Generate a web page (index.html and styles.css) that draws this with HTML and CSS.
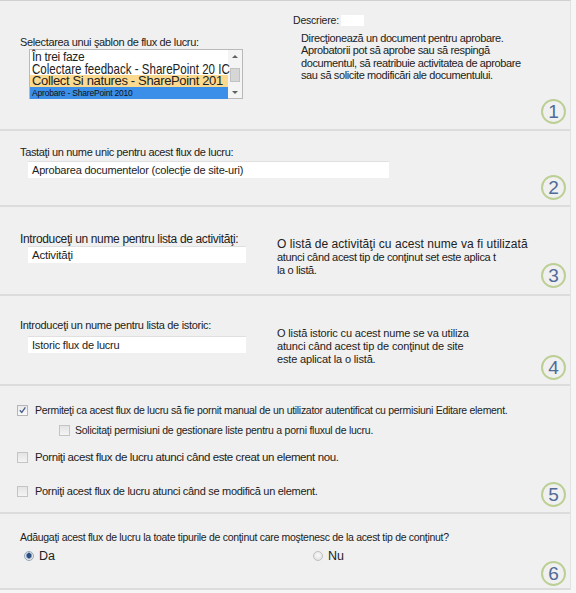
FILE: index.html
```html
<!DOCTYPE html>
<html lang="ro">
<head>
<meta charset="utf-8">
<title>Flux de lucru</title>
<link rel="stylesheet" href="styles.css">
</head>
<body>
<div class="page">
  <section class="sec sec1">
    <div class="col-left">
      <div class="label l1">Selectarea unui şablon de flux de lucru:</div>
      <div class="listbox">
        <div class="items">
          <div class="it it1">În trei faze</div>
          <div class="it it2"><span class="sq sq2">Colectare feedback - SharePoint 20 IC</span></div>
          <div class="it it3"><span class="sq sq3">Collect Si natures - SharePoint 201</span></div>
          <div class="it it4">Aprobare - SharePoint 2010</div>
        </div>
        <div class="scroll">
          <span class="arr up"></span>
          <span class="thumb"></span>
          <span class="arr down"></span>
        </div>
      </div>
    </div>
    <div class="col-right">
      <div class="desc-head">Descriere:<span class="blank"></span></div>
      <div class="desc">Direcţionează un document pentru aprobare.<br>Aprobatorii pot să aprobe sau să respingă<br>documentul, să reatribuie activitatea de aprobare<br>sau să solicite modificări ale documentului.</div>
    </div>
    <span class="num n1">1</span>
  </section>

  <section class="sec sec2">
    <div class="label l2">Tastaţi un nume unic pentru acest flux de lucru:</div>
    <div class="field f-wide">Aprobarea documentelor (colecţie de site-uri)</div>
    <span class="num n2">2</span>
  </section>

  <section class="sec sec3">
    <div class="col-left">
      <div class="label l3">Introduceţi un nume pentru lista de activităţi:</div>
      <div class="field f-mid">Activităţi</div>
    </div>
    <div class="col-note">
      <div class="note-big">O listă de activităţi cu acest nume va fi utilizată</div>
      <div class="note">atunci când acest tip de conţinut set este aplica t<br>la o listă.</div>
    </div>
    <span class="num n3">3</span>
  </section>

  <section class="sec sec4">
    <div class="col-left">
      <div class="label l4">Introduceţi un nume pentru lista de istoric:</div>
      <div class="field f-mid f-small">Istoric flux de lucru</div>
    </div>
    <div class="col-note">
      <div class="note note4">O listă istoric cu acest nume se va utiliza<br>atunci când acest tip de conţinut de site<br>este aplicat la o listă.</div>
    </div>
    <span class="num n4">4</span>
  </section>

  <section class="sec sec5">
    <div class="chk-row r1"><span class="cb checked"><svg viewBox="0 0 10 10" width="10" height="10"><path d="M2 5.2 L4.2 7.6 L8.2 2" fill="none" stroke="#4a5f8c" stroke-width="1.5"/></svg></span><span class="ct ct1">Permiteţi ca acest flux de lucru să fie pornit manual de un utilizator autentificat cu permisiuni Editare element.</span></div>
    <div class="chk-row r2"><span class="cb"></span><span class="ct ct2">Solicitaţi permisiuni de gestionare liste pentru a porni fluxul de lucru.</span></div>
    <div class="chk-row r3"><span class="cb"></span><span class="ct ct3">Porniţi acest flux de lucru atunci când este creat un element nou.</span></div>
    <div class="chk-row r4"><span class="cb"></span><span class="ct ct4">Porniţi acest flux de lucru atunci când se modifică un element.</span></div>
    <span class="num n5">5</span>
  </section>

  <section class="sec sec6">
    <div class="label l6">Adăugaţi acest flux de lucru la toate tipurile de conţinut care moştenesc de la acest tip de conţinut?</div>
    <div class="radios">
      <div class="radio-item ri-da"><span class="rb on"></span><span class="rt">Da</span></div>
      <div class="radio-item ri-nu"><span class="rb"></span><span class="rt">Nu</span></div>
    </div>
    <span class="num n6">6</span>
  </section>
</div>
</body>
</html>
```

FILE: styles.css
```css
* { box-sizing: border-box; }
html, body { margin: 0; padding: 0; }
body {
  background: #f6f6f6;
  font-family: "Liberation Sans", Arial, sans-serif;
  color: #222;
  width: 576px;
  height: 593px;
  overflow: hidden;
}
.page {
  width: 571px;
  background: #f0f0f0;
  border-top: 1px solid #d0d0d0;
  border-right: 1px solid #e2e2e2;
}
.sec {
  position: relative;
  border-bottom: 2px solid #dcdcdc;
  padding-left: 20px;
}
.sec1 { height: 130px; display: grid; grid-template-columns: 273px 1fr; }
.sec2 { height: 76px; padding-top: 15px; }
.sec3 { height: 89px; display: grid; grid-template-columns: 257px 1fr; padding-top: 26px; }
.sec4 { height: 90px; display: grid; grid-template-columns: 257px 1fr; padding-top: 23px; }
.sec5 { height: 128px; padding-top: 17px; padding-left: 17px; }
.sec6 { height: 76px; padding-top: 17px; }

.label { font-size: 11px; line-height: 13px; letter-spacing: -0.3px; white-space: nowrap; }
.l1 { margin-top: 35px; letter-spacing: -0.35px; }
.l2 { letter-spacing: -0.35px; }
.l3 { font-size: 12px; line-height: 13px; letter-spacing: -0.35px; }
.l4 { font-size: 11px; line-height: 13px; letter-spacing: -0.3px; }
.l6 { font-size: 10.5px; letter-spacing: -0.3px; }

/* listbox */
.listbox {
  margin-left: 9px;
  width: 214px;
  height: 50px;
  background: #fff;
  border: 1px solid #b9b9b9;
  display: flex;
  position: relative;
}
.items { flex: 1; min-width: 0; white-space: nowrap; padding-top: 1px; }
.it { padding-left: 2px; height: 12px; }
.it1 { font-size: 12px; line-height: 12px; letter-spacing: -0.3px; }
.it2 { font-size: 15px; line-height: 12px; position: relative; z-index: 2; }
.it3 { font-size: 13px; line-height: 12px; background: #fbd98f; }
.it4 { font-size: 8.5px; line-height: 12px; background: #3b8fe8; color: #111; letter-spacing: -0.2px; }
.sq { display: inline-block; transform-origin: 0 50%; }
.sq2 { transform: scaleX(0.77); }
.sq3 { letter-spacing: -0.35px; }
.scroll {
  width: 14px;
  background: #f4f4f4;
  display: flex;
  flex-direction: column;
  align-items: center;
  justify-content: space-between;
  padding: 5px 0 4px;
  position: relative;
  z-index: 1;
}
.thumb { width: 10px; height: 14px; background: #d6d6d6; border: 1px solid #c2c2c2; }
.arr { width: 0; height: 0; border-left: 3px solid transparent; border-right: 3px solid transparent; }
.arr.up { border-bottom: 3px solid #606060; }
.arr.down { border-top: 3px solid #606060; }

/* description */
.col-right { padding-top: 13px; }
.desc-head { font-size: 10.5px; line-height: 12px; letter-spacing: -0.2px; display: flex; align-items: center; }
.blank { display: inline-block; width: 23px; height: 11px; background: #fff; margin-left: 2px; }
.desc { margin-top: 6px; margin-left: 8px; font-size: 11px; line-height: 12.4px; letter-spacing: -0.38px; white-space: nowrap; }

/* fields */
.field {
  background: #fff;
  border-top: 1px solid #e0e0e0;
  height: 17px;
  font-size: 11px;
  line-height: 16px;
  padding-left: 4px;
  letter-spacing: -0.2px;
  white-space: nowrap;
}
.f-wide { margin-left: 8px; margin-top: 2px; width: 361px; }
.f-mid { margin-left: 8px; margin-top: 0; width: 218px; font-size: 11.5px; letter-spacing: -0.2px; }
.f-small { margin-top: 4px; font-size: 11px; }

.col-note { white-space: nowrap; }
.sec3 .col-note { padding-top: 5px; }
.sec4 .col-note { padding-top: 8px; }
.note-big { font-size: 12px; line-height: 13px; letter-spacing: 0.05px; }
.note { font-size: 11px; line-height: 13px; letter-spacing: -0.35px; }
.note4 { letter-spacing: -0.15px; }

/* checkboxes */
.chk-row { display: flex; align-items: center; white-space: nowrap; }
.r2 { margin-left: 42px; margin-top: 6px; }
.r3 { margin-top: 13px; }
.r4 { margin-top: 20px; }
.cb {
  width: 11px; height: 11px;
  border: 1px solid #c4c4c4;
  background: linear-gradient(#e4e4e4, #f4f4f4);
  display: inline-flex; align-items: center; justify-content: center;
  flex: none;
}
.cb.checked { background: linear-gradient(#eaeaea, #fafafa); border-color: #b5b5b5; }
.ct { margin-left: 7px; font-size: 11.5px; line-height: 14px; letter-spacing: -0.45px; }
.ct1 { font-size: 10.5px; letter-spacing: -0.3px; }
.ct2 { font-size: 10.5px; letter-spacing: -0.25px; margin-left: 5px; }
.ct3 { font-size: 11.5px; letter-spacing: -0.4px; }
.ct4 { font-size: 11px; letter-spacing: -0.3px; }

/* radios */
.radios { display: flex; margin-top: 5px; padding-left: 4px; }
.radio-item { display: flex; align-items: center; }
.ri-da { width: 289px; }
.rb {
  width: 10px; height: 10px; border-radius: 50%;
  border: 1px solid #c0c0c0;
  background: radial-gradient(circle at 50% 40%, #fafafa, #dcdcdc);
  flex: none;
}
.rb.on {
  border-color: #9aa7b8;
  background: radial-gradient(circle at 50% 45%, #2b4f80 0 2.2px, #8ba4c4 2.6px 3px, #e8e8e8 3.4px);
}
.rt { margin-left: 5px; font-size: 12.5px; line-height: 14px; }

/* step numbers */
.num {
  position: absolute;
  right: 4px;
  bottom: 5px;
  width: 25px; height: 25px;
  border-radius: 50%;
  border: 2px solid #bccf94;
  color: #4f6b98;
  font-size: 19px;
  line-height: 21px;
  text-align: center;
  font-family: "Liberation Sans", Arial, sans-serif;
}
.n3 { bottom: 6px; }
.n4 { bottom: 4px; }
.n6 { bottom: 2px; }
```
